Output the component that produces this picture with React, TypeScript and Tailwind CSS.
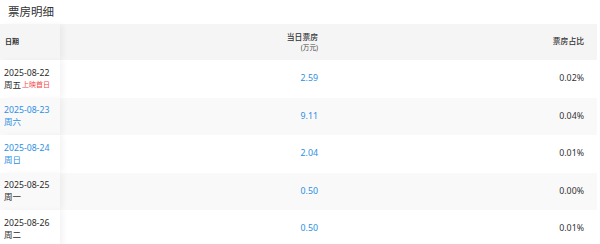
import React from "react";

type Row = {
  date: string;
  week: string;
  tag?: string;
  weekend?: boolean;
  box: string;
  ratio: string;
  alt?: boolean;
};

const rows: Row[] = [
  { date: "2025-08-22", week: "周五", tag: "上映首日", box: "2.59", ratio: "0.02%" },
  { date: "2025-08-23", week: "周六", weekend: true, box: "9.11", ratio: "0.04%", alt: true },
  { date: "2025-08-24", week: "周日", weekend: true, box: "2.04", ratio: "0.01%" },
  { date: "2025-08-25", week: "周一", box: "0.50", ratio: "0.00%", alt: true },
  { date: "2025-08-26", week: "周二", box: "0.50", ratio: "0.01%" },
];

const font = { fontFamily: '"Noto Sans", "Noto Sans CJK SC", sans-serif' };

export default function App() {
  return (
    <div className="w-[600px] h-[244px] overflow-hidden bg-white" style={font}>
      <div className="h-[24px] pl-[8px] flex items-center text-[11.5px] text-[#333]">票房明细</div>
      <div className="w-[597px]">
        <div className="flex h-[36px] bg-[#f5f5f5]">
          <div className="w-[60px] shrink-0 flex items-center pl-[5px] text-[7px] font-bold text-[#333] relative z-10 bg-[#f5f5f5] shadow-[4px_0_6px_-1px_rgba(0,0,0,0.05)]">
            日期
          </div>
          <div className="w-[270px] shrink-0 flex flex-col items-end justify-center pr-[12px] leading-[10px]">
            <span className="text-[7.8px] text-[#333] font-medium">当日票房</span>
            <span className="text-[6.6px] text-[#444] mt-[1px]">(万元)</span>
          </div>
          <div className="flex-1 flex items-center justify-end pr-[13px] text-[7.8px] text-[#333] font-medium">
            票房占比
          </div>
        </div>
        {rows.map((r) => (
          <div key={r.date} className={`flex h-[37.5px] ${r.alt ? "bg-[#f9f9f9]" : "bg-white"}`}>
            <div
              className={`w-[60px] shrink-0 flex flex-col justify-center pl-[4px] leading-[11px] relative z-10 shadow-[4px_0_6px_-1px_rgba(0,0,0,0.05)] ${
                r.alt ? "bg-[#f9f9f9]" : "bg-white"
              } ${r.weekend ? "text-[#2b8fe5]" : "text-[#2a2a2a]"}`}
            >
              <span className="text-[8.7px]">{r.date}</span>
              <span className="text-[8.5px] flex items-center">
                {r.week}
                {r.tag && <span className="ml-[1px] text-[7px] text-[#f5433f]">{r.tag}</span>}
              </span>
            </div>
            <div className="w-[270px] shrink-0 flex items-center justify-end pr-[12px] text-[8.8px] text-[#2b8fe5]">
              {r.box}
            </div>
            <div className="flex-1 flex items-center justify-end pr-[13px] text-[8.8px] text-[#333]">
              {r.ratio}
            </div>
          </div>
        ))}
      </div>
    </div>
  );
}
